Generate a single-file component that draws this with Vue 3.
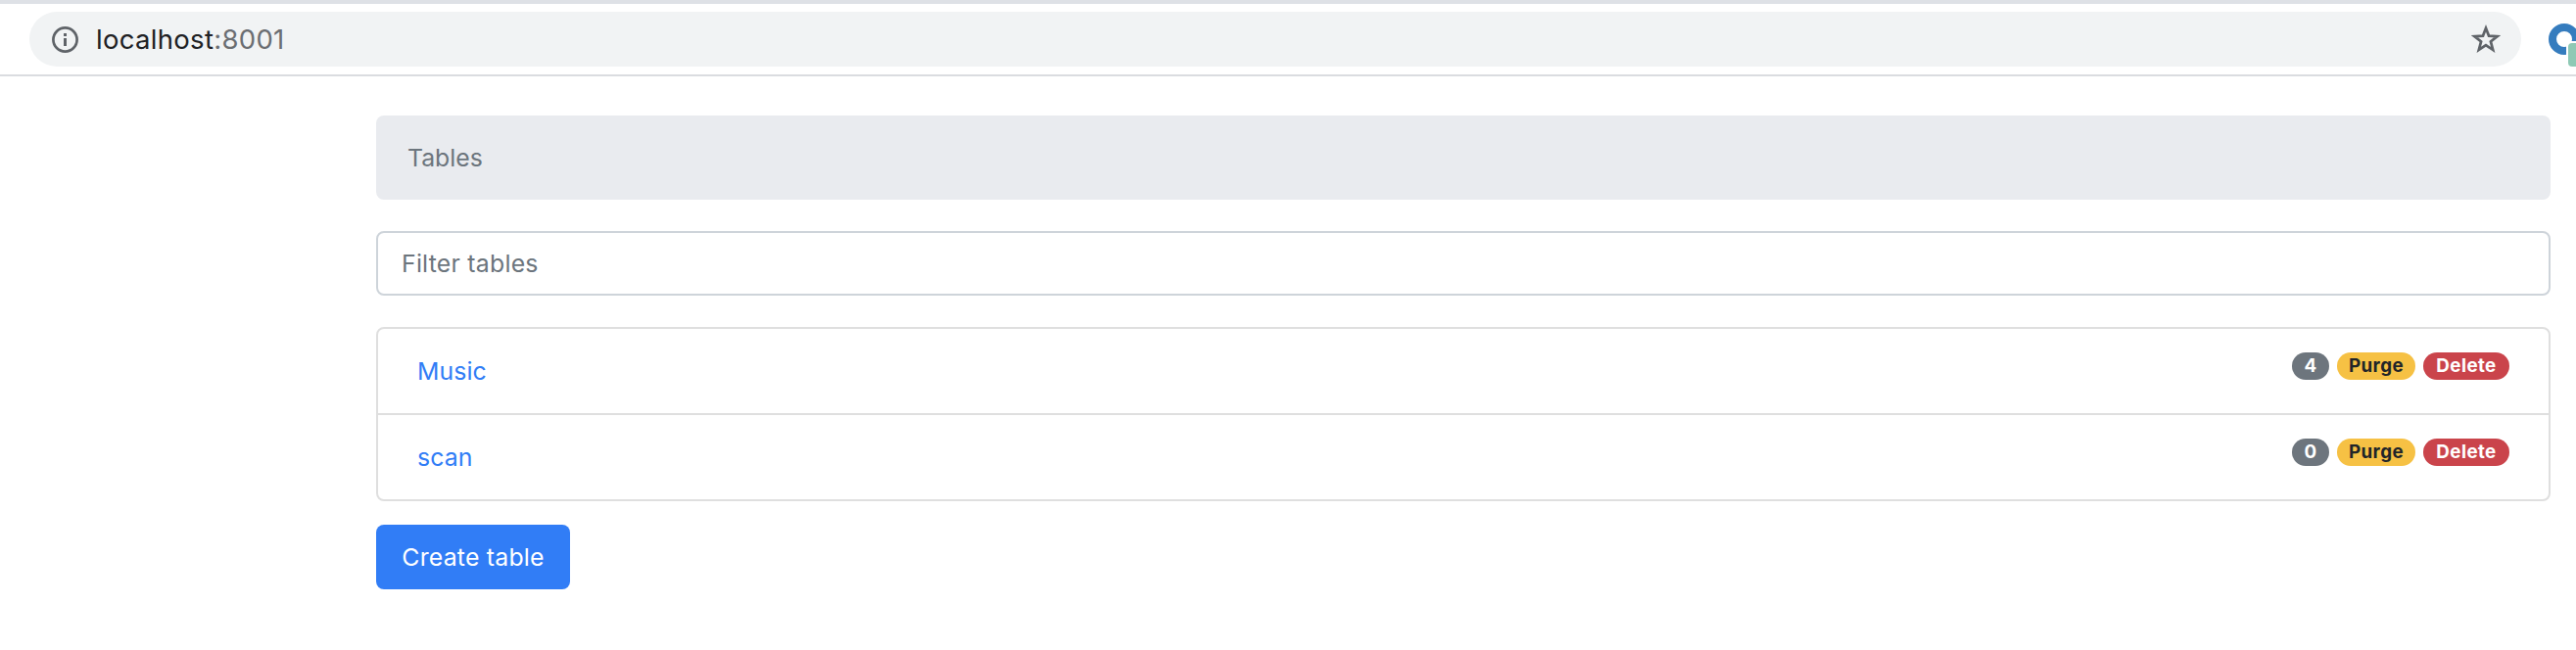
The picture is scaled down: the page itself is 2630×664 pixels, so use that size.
<script setup>
const tables = [
  { name: 'Music', count: 4 },
  { name: 'scan', count: 0 },
]
</script>

<template>
  <div class="page">
    <header class="toolbar">
      <div class="omnibox">
        <svg class="info" width="28" height="28" viewBox="0 0 28 28" fill="none">
          <circle cx="14.5" cy="14.5" r="12.1" stroke="#5f6368" stroke-width="2.7" />
          <path d="M13 8h3v3h-3zM13 13h3v8h-3z" fill="#5f6368" />
        </svg>
        <div class="url">localhost<span>:8001</span></div>
        <svg class="star" width="30" height="30" viewBox="0 0 30 30" fill="none">
          <path d="M15 3.8l3 7.8 8.6.5-6.7 5.3 2.3 8.5-7.2-4.7-7.2 4.7 2.3-8.5-6.7-5.3 8.6-.5z" stroke="#5f6368" stroke-width="2.7" />
        </svg>
      </div>
      <svg class="extension" width="28" height="48" viewBox="0 0 28 48">
        <circle cx="16" cy="20" r="12" fill="none" stroke="#357cbe" stroke-width="8" />
        <rect x="18" y="22" width="24" height="30" rx="2" fill="#fff" />
        <rect x="20" y="24" width="24" height="24" rx="4" fill="#8ec9b5" />
      </svg>
    </header>
    <main class="container">
      <nav class="breadcrumb"><span class="crumb">Tables</span></nav>
      <input class="filter" type="text" placeholder="Filter tables" />
      <ul class="list">
        <li v-for="table in tables" :key="table.name" class="row">
          <a class="link">{{ table.name }}</a>
          <div class="badges">
            <span class="badge count">{{ table.count }}</span>
            <span class="badge purge">Purge</span>
            <span class="badge delete">Delete</span>
          </div>
        </li>
      </ul>
      <button class="create">Create table</button>
    </main>
  </div>
</template>

<style>
body { margin: 0; background: #fff; overflow: hidden; }
</style>

<style scoped>
.page {
  box-sizing: border-box;
  height: 664px;
  overflow: hidden;
  font-family: Inter, "Liberation Sans", sans-serif;
  font-size: 24.8px;
  font-weight: 430;
  line-height: 38px;
}
.toolbar {
  box-sizing: border-box;
  height: 78px;
  padding: 8px 0 0 30px;
  border-top: 4px solid #dee1e6;
  border-bottom: 2px solid #dadce0;
  display: flex;
  align-items: flex-start;
}
.omnibox {
  box-sizing: border-box;
  width: 2544px;
  height: 56px;
  padding: 0 20px 0 22px;
  border-radius: 28px;
  background: #f1f3f4;
  display: flex;
  align-items: center;
  flex: none;
}
.url {
  margin-left: 18px;
  flex: 1;
  color: #202124;
  font-size: 27.5px;
  letter-spacing: 0.3px;
}
.url span { color: #6b6e72; }
.star { margin-right: 1px; }
.extension { flex: none; margin: 8px 0 0 28px; }
.container {
  width: 2220px;
  margin: 40px 0 0 384px;
}
.breadcrumb {
  box-sizing: border-box;
  height: 86px;
  padding: 24px 32px;
  border-radius: 8px;
  background: #e9ebef;
  color: #6c757d;
}
.filter {
  display: block;
  box-sizing: border-box;
  width: 100%;
  height: 66px;
  margin: 32px 0;
  padding: 0 24px;
  border: 2px solid #ced4da;
  border-radius: 8px;
  background: #fff;
  font: inherit;
  letter-spacing: 0.24px;
}
.filter::placeholder { color: #6c757d; opacity: 1; }
.list {
  box-sizing: border-box;
  height: 178px;
  margin: 0;
  padding: 0;
  list-style: none;
  border: 2px solid #dfdfdf;
  border-radius: 8px;
}
.row {
  box-sizing: border-box;
  height: 88px;
  padding: 24px 40px;
  display: flex;
  justify-content: space-between;
  align-items: flex-start;
  border-bottom: 2px solid #dfdfdf;
}
.row:last-child { height: 86px; border-bottom: 0; }
.link { color: #317df6; letter-spacing: 0.1px; }
.badges { display: flex; gap: 8px; }
.badge {
  height: 28px;
  line-height: 27px;
  border-radius: 14px;
  text-align: center;
  font-size: 18.8px;
  font-weight: 750;
  letter-spacing: 0.4px;
  color: #fff;
}
.count { width: 38px; background: #6d757d; }
.purge { width: 80px; background: #f6c144; color: #212529; }
.delete { width: 88px; background: #ca444b; }
.create {
  display: block;
  width: 198px;
  height: 66px;
  margin-top: 24px;
  padding: 0;
  border: 0;
  border-radius: 8px;
  background: #317df6;
  color: #fff;
  font: inherit;
  letter-spacing: 0.22px;
}
</style>
